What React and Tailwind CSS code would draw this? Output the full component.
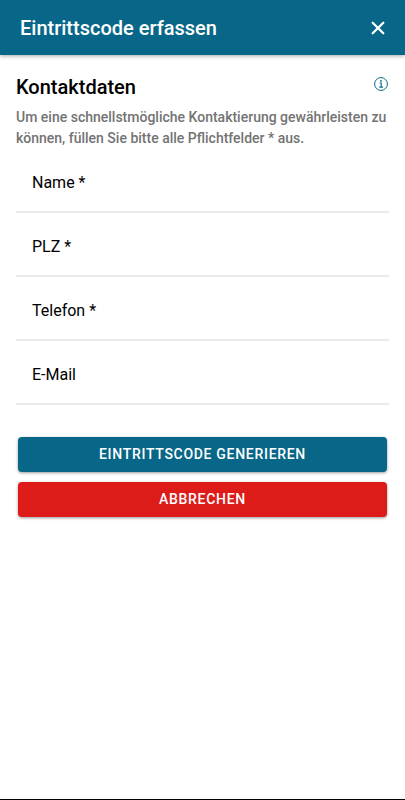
const fields = [
  { id: 'name', label: 'Name *', type: 'text', required: true },
  { id: 'plz', label: 'PLZ *', type: 'text', required: true },
  { id: 'telefon', label: 'Telefon *', type: 'tel', required: true },
  { id: 'email', label: 'E-Mail', type: 'email', required: false },
];

function CloseIcon() {
  return (
    <svg viewBox="0 0 14 14" className="size-[14px]" fill="none" stroke="currentColor" strokeWidth="2.3" strokeLinecap="round" aria-hidden="true">
      <path d="M1.7 1.7 12.3 12.3M12.3 1.7 1.7 12.3" />
    </svg>
  );
}

function InfoIcon() {
  return (
    <svg viewBox="0 0 14 14" className="size-[14px]" fill="none" stroke="currentColor" aria-hidden="true">
      <circle cx="7" cy="7" r="6.4" strokeWidth="1" />
      <path d="M5.7 6H7.2V10M5.3 10.1H9" strokeWidth="1.1" />
      <circle cx="7" cy="3.9" r="0.9" fill="currentColor" stroke="none" />
    </svg>
  );
}

export default function App() {
  return (
    <div className="flex min-h-screen flex-col border-b border-black bg-white font-['Roboto',sans-serif] text-black">
      <header className="flex h-[55px] items-center justify-between bg-[#086788] px-5 text-white shadow-[0_1px_4px_rgba(0,0,0,0.35)]">
        <h1 className="text-[20px] leading-6 font-medium">Eintrittscode erfassen</h1>
        <button type="button" aria-label="Schließen" className="flex items-center">
          <CloseIcon />
        </button>
      </header>

      <main className="px-4 pt-[18px]">
        <div className="flex items-start justify-between">
          <h2 className="text-[20px] leading-7 font-medium">Kontaktdaten</h2>
          <button type="button" aria-label="Information" className="mt-1 mr-px flex text-[#086788]">
            <InfoIcon />
          </button>
        </div>
        <p className="mt-[6px] text-[14px] leading-[21px] font-medium text-[#737373]">
          Um eine schnellstmögliche Kontaktierung gewährleisten zu können, füllen Sie bitte alle Pflichtfelder * aus.
        </p>

        <form>
          {fields.map((field) => (
            <div key={field.id} className="flex h-16 items-center border-b-2 border-[#ebebeb] px-4 pt-[6px]">
              <label htmlFor={field.id} className="shrink-0 text-base leading-6">
                {field.label}
              </label>
              <input
                id={field.id}
                type={field.type}
                required={field.required}
                className="ml-4 h-10 min-w-0 flex-1 bg-transparent text-base outline-none"
              />
            </div>
          ))}

          <div className="mt-8 flex flex-col gap-[10px] px-[2px]">
            <button
              type="submit"
              className="h-[35px] rounded bg-[#086788] text-[14px] font-medium tracking-wider text-white uppercase shadow-[0_1px_3px_rgba(0,0,0,0.4)]"
            >
              Eintrittscode generieren
            </button>
            <button
              type="button"
              className="h-[35px] rounded bg-[#dd1c1a] text-[14px] font-medium tracking-wider text-white uppercase shadow-[0_1px_3px_rgba(0,0,0,0.4)]"
            >
              Abbrechen
            </button>
          </div>
        </form>
      </main>
    </div>
  );
}
